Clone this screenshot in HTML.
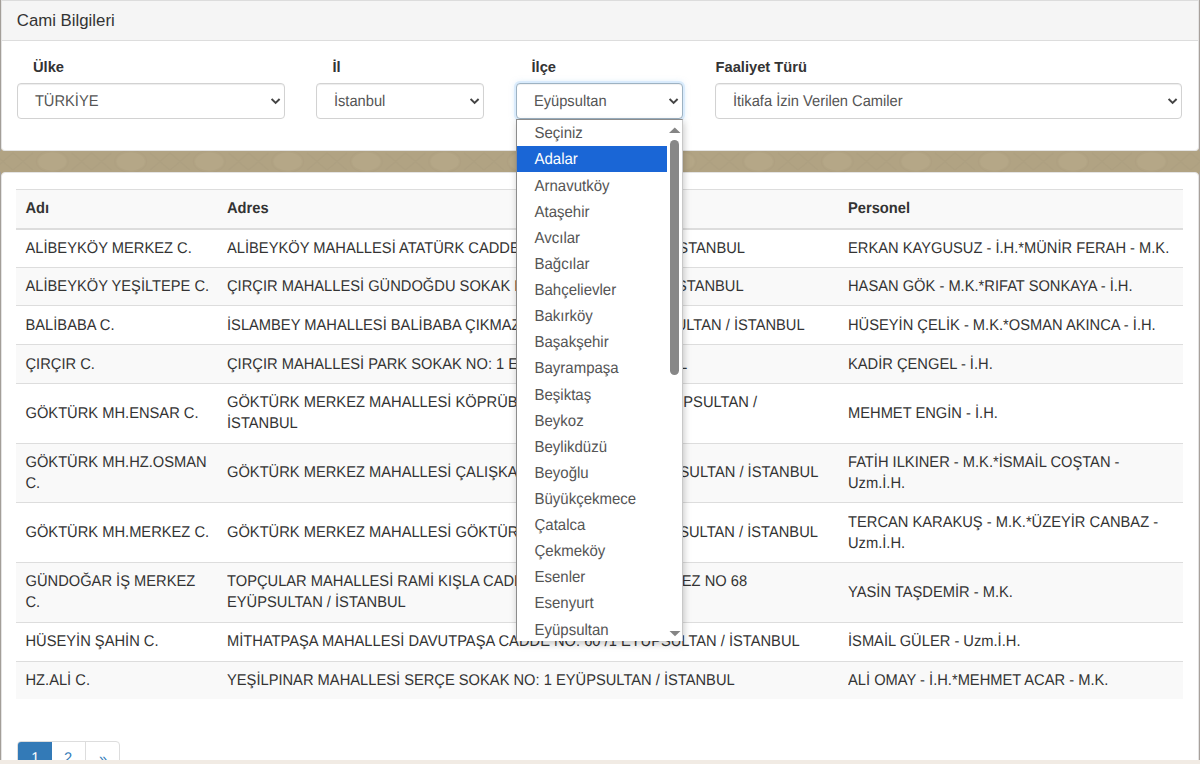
<!DOCTYPE html>
<html><head><meta charset="utf-8">
<style>
*{box-sizing:border-box;margin:0;padding:0}
html,body{width:1200px;height:764px;overflow:hidden}
body{position:relative;background:#b1a383;font-family:"Liberation Sans",sans-serif;color:#333}
.abs{position:absolute}
.t{position:absolute;white-space:nowrap;font-size:14.7px;line-height:21px;color:#333;text-rendering:geometricPrecision;transform:scaleY(1.06);transform-origin:0 15.6px}
.b{font-weight:bold}
.panel{position:absolute;background:#fff;border:1px solid #e4e4e4;border-radius:4px;overflow:hidden}
.sel{position:absolute;top:83px;height:36px;border:1px solid #d2d2d2;border-radius:4px;background:#fff;box-shadow:inset 0 1px 1px rgba(0,0,0,.075)}
.sel .v{position:absolute;white-space:nowrap;font-size:14.7px;line-height:21px;color:#555;top:8.0px;text-rendering:geometricPrecision;transform:scaleY(1.06);transform-origin:0 15.6px}
.chev{position:absolute;top:13.8px}
.lbl{position:absolute;white-space:nowrap;font-size:14.7px;line-height:21px;font-weight:bold;color:#333;top:56.80px;transform:scaleY(1.05);transform-origin:0 15.6px}
.rowbg{position:absolute;left:16px;width:1167px}
.g{background:#f9f9f9}
.dd{position:absolute;left:516px;top:119px;width:167px;height:522px;background:#fff;border:1px solid #8c8c8c;border-right-color:#c8c8c8;border-bottom:none;overflow:hidden;box-shadow:1px 3px 7px rgba(0,0,0,.22)}
.opt{position:absolute;left:0;width:150px;height:26px;font-size:15px;line-height:26px;color:#555;padding-left:17.5px;white-space:nowrap}
.opt span{display:inline-block;text-rendering:geometricPrecision;transform:scaleY(1.06);transform-origin:0 18px}
.hl{background:#1a66d6;color:#fff}
</style></head><body>

<svg class="abs" style="left:0;top:151px" width="1200" height="21"><defs><pattern id="pt" x="170" y="0" width="78.5" height="21" patternUnits="userSpaceOnUse">
<ellipse cx="39.25" cy="10.5" rx="16" ry="11" fill="none" stroke="#a99c7c" stroke-width="1.2" opacity=".4"/>
<ellipse cx="39.25" cy="10.5" rx="14" ry="9" fill="#baac8c" opacity=".5"/>
<path d="M0 2 C8 8 12 13 20 19 M20 2 C12 8 8 13 0 19 M58.5 2 C66.5 8 70.5 13 78.5 19 M78.5 2 C70.5 8 66.5 13 58.5 19" stroke="#a89a7a" stroke-width="1.6" fill="none" opacity=".3"/>
</pattern></defs><rect width="1200" height="21" fill="url(#pt)"/></svg>
<div class="panel" style="left:1px;top:0;width:1198px;height:151px;border-top-color:#dcdcdc;border-top-left-radius:0;border-top-right-radius:0">
  <div class="abs" style="left:0;top:0;width:100%;height:40px;background:#f5f5f5;border-bottom:1px solid #ddd"></div>
</div>
<div class="abs" style="left:16.8px;top:8.90px;font-size:16.8px;line-height:23px;white-space:nowrap;color:#333">Cami Bilgileri</div>

<div class="lbl" style="left:33px">Ülke</div>
<div class="lbl" style="left:332.5px">İl</div>
<div class="lbl" style="left:531.5px">İlçe</div>
<div class="lbl" style="left:715.5px">Faaliyet Türü</div>

<div class="sel" style="left:17px;width:268px"><div class="v" style="left:16.9px">TÜRKİYE</div><svg class="chev" style="left:253px" width="10" height="7" viewBox="0 0 10 7"><path d="M0.6 1 L4.6 5 L8.6 1" fill="none" stroke="#444" stroke-width="1.9"/></svg></div>
<div class="sel" style="left:316px;width:168px"><div class="v" style="left:16.9px">İstanbul</div><svg class="chev" style="left:153px" width="10" height="7" viewBox="0 0 10 7"><path d="M0.6 1 L4.6 5 L8.6 1" fill="none" stroke="#444" stroke-width="1.9"/></svg></div>
<div class="sel" style="left:715px;width:467px"><div class="v" style="left:16.9px">İtikafa İzin Verilen Camiler</div><svg class="chev" style="left:452px" width="10" height="7" viewBox="0 0 10 7"><path d="M0.6 1 L4.6 5 L8.6 1" fill="none" stroke="#444" stroke-width="1.9"/></svg></div>

<div class="panel" style="left:1px;top:172px;width:1198px;height:620px"></div>

<div class="rowbg g" style="top:189px;height:41px;border-top:1px solid #ddd;border-bottom:2px solid #ddd"></div>
<div class="t b" style="left:25.5px;top:199.40px">Adı</div>
<div class="t b" style="left:227px;top:199.40px">Adres</div>
<div class="t b" style="left:848px;top:199.40px">Personel</div>
<div class="rowbg" style="top:230px;height:37px;"></div>
<div class="t" style="left:25.5px;top:238.50px">ALİBEYKÖY MERKEZ C.</div>
<div class="t" style="left:227px;top:238.50px">ALİBEYKÖY MAHALLESİ ATATÜRK CADDE NO: 1 EYÜPSULTAN / İSTANBUL</div>
<div class="t" style="left:848px;top:238.50px">ERKAN KAYGUSUZ - İ.H.*MÜNİR FERAH - M.K.</div>
<div class="rowbg g" style="top:267px;height:38px;border-top:1px solid #ddd;"></div>
<div class="t" style="left:25.5px;top:276.95px">ALİBEYKÖY YEŞİLTEPE C.</div>
<div class="t" style="left:227px;top:276.95px">ÇIRÇIR MAHALLESİ GÜNDOĞDU SOKAK NO: 10 EYÜPSULTAN / İSTANBUL</div>
<div class="t" style="left:848px;top:276.95px">HASAN GÖK - M.K.*RIFAT SONKAYA - İ.H.</div>
<div class="rowbg" style="top:305px;height:39px;border-top:1px solid #ddd;"></div>
<div class="t" style="left:25.5px;top:315.65px">BALİBABA C.</div>
<div class="t" style="left:227px;top:315.65px">İSLAMBEY MAHALLESİ BALİBABA ÇIKMAZI SOKAK NO: 1 EYÜPSULTAN / İSTANBUL</div>
<div class="t" style="left:848px;top:315.65px">HÜSEYİN ÇELİK - M.K.*OSMAN AKINCA - İ.H.</div>
<div class="rowbg g" style="top:344px;height:39px;border-top:1px solid #ddd;"></div>
<div class="t" style="left:25.5px;top:354.65px">ÇIRÇIR C.</div>
<div class="t" style="left:227px;top:354.65px">ÇIRÇIR MAHALLESİ PARK SOKAK NO: 1 EYÜPSULTAN / İSTANBUL</div>
<div class="t" style="left:848px;top:354.65px">KADİR ÇENGEL - İ.H.</div>
<div class="rowbg" style="top:383px;height:60px;border-top:1px solid #ddd;"></div>
<div class="t" style="left:25.5px;top:403.75px">GÖKTÜRK MH.ENSAR C.</div>
<div class="t" style="left:227px;top:393.25px">GÖKTÜRK MERKEZ MAHALLESİ KÖPRÜBAŞI SOKAK NO: 12 <span style="margin-left:2.5px"></span>EYÜPSULTAN /</div>
<div class="t" style="left:227px;top:414.25px">İSTANBUL</div>
<div class="t" style="left:848px;top:403.75px">MEHMET ENGİN - İ.H.</div>
<div class="rowbg g" style="top:443px;height:59px;border-top:1px solid #ddd;"></div>
<div class="t" style="left:25.5px;top:452.75px">GÖKTÜRK MH.HZ.OSMAN</div>
<div class="t" style="left:25.5px;top:473.75px">C.</div>
<div class="t" style="left:227px;top:463.25px">GÖKTÜRK MERKEZ MAHALLESİ ÇALIŞKAN SOKAK NO: 10 <span style="margin-left:2px"></span>EYÜPSULTAN / İSTANBUL</div>
<div class="t" style="left:848px;top:452.75px">FATİH ILKINER - M.K.*İSMAİL COŞTAN -</div>
<div class="t" style="left:848px;top:473.75px">Uzm.İ.H.</div>
<div class="rowbg" style="top:502px;height:60px;border-top:1px solid #ddd;"></div>
<div class="t" style="left:25.5px;top:523.10px">GÖKTÜRK MH.MERKEZ C.</div>
<div class="t" style="left:227px;top:523.10px">GÖKTÜRK MERKEZ MAHALLESİ GÖKTÜRK CADDE NO: 1 <span style="margin-left:9px"></span>EYÜPSULTAN / İSTANBUL</div>
<div class="t" style="left:848px;top:512.60px">TERCAN KARAKUŞ - M.K.*ÜZEYİR CANBAZ -</div>
<div class="t" style="left:848px;top:533.60px">Uzm.İ.H.</div>
<div class="rowbg g" style="top:562px;height:60px;border-top:1px solid #ddd;"></div>
<div class="t" style="left:25.5px;top:572.40px">GÜNDOĞAR İŞ MERKEZ</div>
<div class="t" style="left:25.5px;top:593.40px">C.</div>
<div class="t" style="left:227px;top:572.40px">TOPÇULAR MAHALLESİ RAMİ KIŞLA CADDESİ İŞ <span style="margin-left:69px"></span>MERKEZ NO 68</div>
<div class="t" style="left:227px;top:593.40px">EYÜPSULTAN / İSTANBUL</div>
<div class="t" style="left:848px;top:582.90px">YASİN TAŞDEMİR - M.K.</div>
<div class="rowbg" style="top:622px;height:39px;border-top:1px solid #ddd;"></div>
<div class="t" style="left:25.5px;top:632.10px">HÜSEYİN ŞAHİN C.</div>
<div class="t" style="left:227px;top:632.10px">MİTHATPAŞA MAHALLESİ DAVUTPAŞA CADDE NO: 60 /1 EYÜPSULTAN / İSTANBUL</div>
<div class="t" style="left:848px;top:632.10px">İSMAİL GÜLER - Uzm.İ.H.</div>
<div class="rowbg g" style="top:661px;height:38px;border-top:1px solid #ddd;"></div>
<div class="t" style="left:25.5px;top:670.60px">HZ.ALİ C.</div>
<div class="t" style="left:227px;top:670.60px">YEŞİLPINAR MAHALLESİ SERÇE SOKAK NO: 1 EYÜPSULTAN / İSTANBUL</div>
<div class="t" style="left:848px;top:670.60px">ALİ OMAY - İ.H.*MEHMET ACAR - M.K.</div>

<div class="abs" style="left:17px;top:741px;width:103px;height:36px;border:1px solid #ddd;border-radius:4px;overflow:hidden;background:#fff">
  <div class="abs" style="left:-1px;top:-1px;width:35px;height:37px;background:#337ab7"></div>
  <div class="abs" style="left:67px;top:0;width:1px;height:36px;background:#ddd"></div>
  <div class="t" style="left:13.3px;top:7px;color:#fff">1</div>
  <div class="t" style="left:46px;top:7px;color:#337ab7">2</div>
  <div class="t" style="left:81px;top:8px;color:#337ab7">»</div>
</div>
<div class="abs" style="left:0;top:760px;width:1200px;height:4px;background:#f1ebe4"></div>
<div class="abs" style="left:0;top:0;width:1px;height:151px;background:#a39e98"></div>
<div class="abs" style="left:0;top:172px;width:1px;height:588px;background:#a39e98"></div>
<div class="abs" style="left:1199px;top:0;width:1px;height:151px;background:#a8a19c"></div>
<div class="abs" style="left:1199px;top:172px;width:1px;height:588px;background:#a8a19c"></div>

<div class="sel" style="left:516px;width:167px;border-color:#9db2c2;box-shadow:inset 0 1px 1px rgba(0,0,0,.06),0 0 0 2px rgba(215,234,252,.9),0 0 6px rgba(150,200,240,.5)"><div class="v" style="left:16.9px">Eyüpsultan</div><svg class="chev" style="left:152px" width="10" height="7" viewBox="0 0 10 7"><path d="M0.6 1 L4.6 5 L8.6 1" fill="none" stroke="#444" stroke-width="1.9"/></svg></div>
<div class="dd">
<div class="opt" style="top:0.30px"><span>Seçiniz</span></div>
<div class="opt hl" style="top:26.02px"><span>Adalar</span></div>
<div class="opt" style="top:52.54px"><span>Arnavutköy</span></div>
<div class="opt" style="top:78.66px"><span>Ataşehir</span></div>
<div class="opt" style="top:104.78px"><span>Avcılar</span></div>
<div class="opt" style="top:130.90px"><span>Bağcılar</span></div>
<div class="opt" style="top:157.02px"><span>Bahçelievler</span></div>
<div class="opt" style="top:183.14px"><span>Bakırköy</span></div>
<div class="opt" style="top:209.26px"><span>Başakşehir</span></div>
<div class="opt" style="top:235.38px"><span>Bayrampaşa</span></div>
<div class="opt" style="top:261.50px"><span>Beşiktaş</span></div>
<div class="opt" style="top:287.62px"><span>Beykoz</span></div>
<div class="opt" style="top:313.74px"><span>Beylikdüzü</span></div>
<div class="opt" style="top:339.86px"><span>Beyoğlu</span></div>
<div class="opt" style="top:365.98px"><span>Büyükçekmece</span></div>
<div class="opt" style="top:392.10px"><span>Çatalca</span></div>
<div class="opt" style="top:418.22px"><span>Çekmeköy</span></div>
<div class="opt" style="top:444.34px"><span>Esenler</span></div>
<div class="opt" style="top:470.46px"><span>Esenyurt</span></div>
<div class="opt" style="top:496.58px"><span>Eyüpsultan</span></div>
<svg class="abs" style="left:152px;top:7px" width="12" height="7" viewBox="0 0 12 7"><path d="M0 6 L5.8 0.6 L11.5 6 Z" fill="#858585"/></svg>
<div class="abs" style="left:153.2px;top:19.7px;width:9.3px;height:235px;border-radius:4.6px;background:#878787"></div>
<svg class="abs" style="left:152px;top:510px" width="12" height="7" viewBox="0 0 12 7"><path d="M0.5 1 L6 6.2 L11.5 1 Z" fill="#858585"/></svg>
</div>

</body></html>
